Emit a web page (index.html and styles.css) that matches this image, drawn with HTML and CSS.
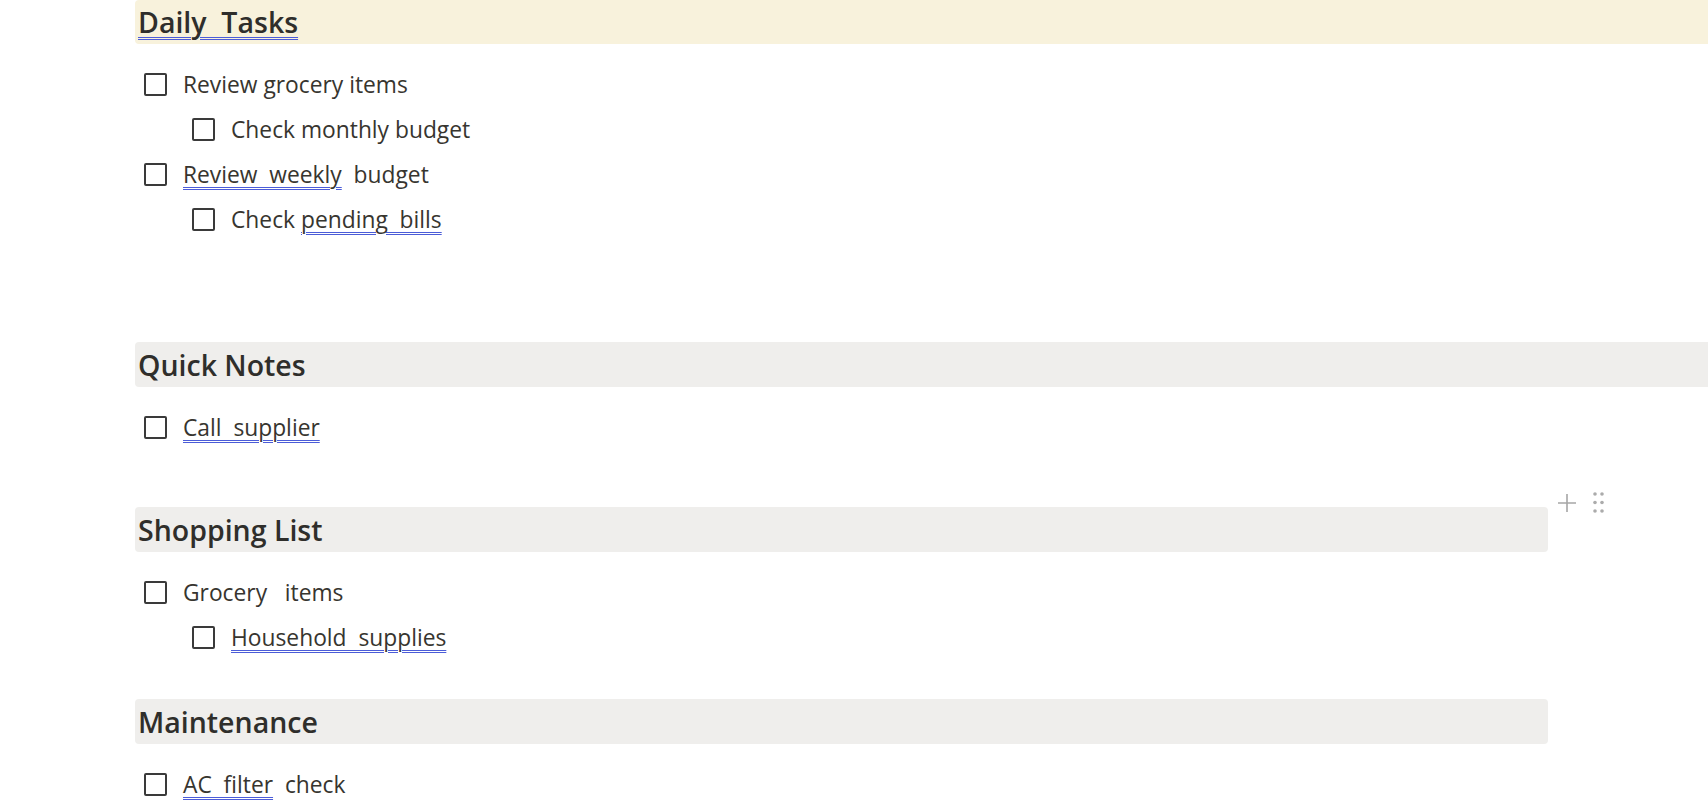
FILE: index.html
```html
<!DOCTYPE html>
<html lang="en">
<head>
<meta charset="utf-8">
<title>Tasks</title>
<link rel="stylesheet" href="styles.css">
</head>
<body>
<main class="page">
  <section class="block">
    <h2 class="heading heading--yellow heading--full"><span class="mark">Daily  Tasks</span></h2>
    <ul class="todos">
      <li class="todo"><span class="box"></span><span class="label">Review grocery items</span></li>
      <li class="todo todo--sub"><span class="box"></span><span class="label">Check monthly budget</span></li>
      <li class="todo"><span class="box"></span><span class="label"><span class="mark">Review  weekly</span>  budget</span></li>
      <li class="todo todo--sub"><span class="box"></span><span class="label">Check <span class="mark">pending  bills</span></span></li>
    </ul>
  </section>

  <section class="block block--notes">
    <h2 class="heading heading--full">Quick Notes</h2>
    <ul class="todos">
      <li class="todo"><span class="box"></span><span class="label"><span class="mark">Call  supplier</span></span></li>
    </ul>
  </section>

  <section class="block block--shopping">
    <div class="block-tools">
      <svg class="tool-plus" width="20" height="20" viewBox="0 0 20 20"><path d="M10 1v18M1 10h18" stroke="#a6a6a6" stroke-width="1.6" fill="none"/></svg>
      <svg class="tool-drag" width="11" height="21" viewBox="0 0 11 21"><g fill="#ababab"><circle cx="2" cy="2" r="1.8"/><circle cx="9" cy="2" r="1.8"/><circle cx="2" cy="10.5" r="1.8"/><circle cx="9" cy="10.5" r="1.8"/><circle cx="2" cy="19" r="1.8"/><circle cx="9" cy="19" r="1.8"/></g></svg>
    </div>
    <h2 class="heading heading--short">Shopping List</h2>
    <ul class="todos">
      <li class="todo"><span class="box"></span><span class="label">Grocery   items</span></li>
      <li class="todo todo--sub"><span class="box"></span><span class="label"><span class="mark">Household  supplies</span></span></li>
    </ul>
  </section>

  <section class="block block--maint">
    <h2 class="heading heading--short">Maintenance</h2>
    <ul class="todos">
      <li class="todo"><span class="box"></span><span class="label"><span class="mark">AC  filter</span>  check</span></li>
    </ul>
  </section>
</main>
</body>
</html>
```
FILE: styles.css
```css
html, body {
  margin: 0;
  padding: 0;
  background: #ffffff;
}

body {
  font-family: "Open Sans", "Noto Sans", sans-serif;
  color: #37352f;
  overflow: hidden;
}

.page {
  padding-left: 135px;
}

.block {
  position: relative;
}

.block--notes {
  margin-top: 100px;
}

.block--shopping {
  margin-top: 57px;
}

.block--maint {
  margin-top: 39px;
}

.heading {
  margin: 0;
  height: 45px;
  display: flex;
  align-items: center;
  padding-left: 3px;
  font-size: 28.5px;
  font-weight: 600;
  color: #2f2e2b;
  background: #efeeec;
  border-radius: 4px;
  white-space: pre;
}

.heading--yellow {
  background: #f8f2dc;
  height: 44px;
}

.heading--full {
  margin-right: 0;
  border-top-right-radius: 0;
  border-bottom-right-radius: 0;
}

.heading--short {
  margin-right: 160px;
}

.todos {
  list-style: none;
  margin: 18px 0 0;
  padding: 0;
}

.todo {
  height: 45px;
  display: flex;
  align-items: center;
  gap: 16px;
  padding-left: 9px;
  font-size: 22.8px;
  white-space: pre;
}

.todo--sub {
  padding-left: 57px;
}

.box {
  flex: none;
  width: 19px;
  height: 19px;
  border: 2px solid #3a3a3a;
  border-radius: 2px;
}

.label {
  line-height: 1;
  padding-top: 2px;
}

.mark {
  text-decoration: underline double #4b5cd8;
  text-decoration-thickness: 1px;
  text-underline-offset: 4px;
}

.block-tools {
  position: absolute;
  right: 104px;
  top: -15px;
  display: flex;
  align-items: center;
  gap: 16px;
}
```
